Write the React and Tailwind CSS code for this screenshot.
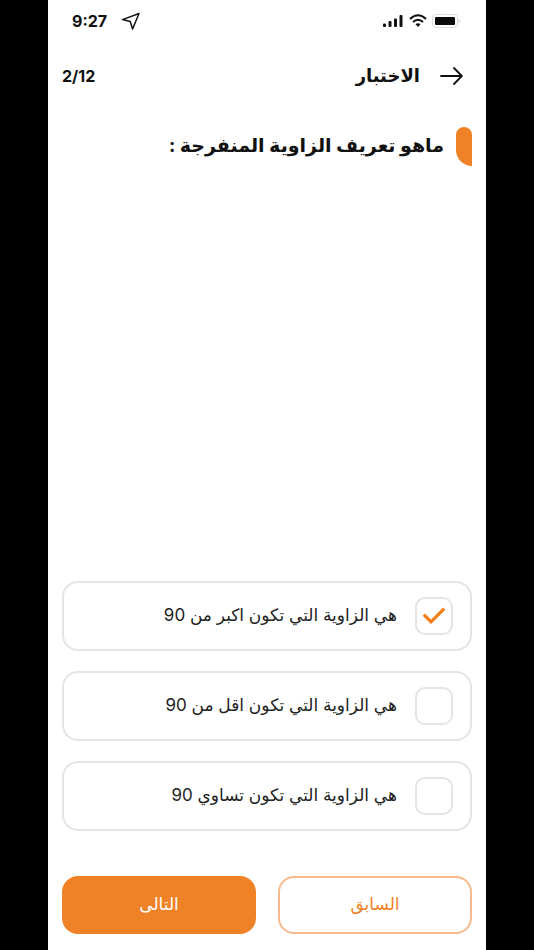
import React, { useState } from 'react'

const options = [
  { id: 'greater', label: 'هي الزاوية التي تكون اكبر من 90' },
  { id: 'less', label: 'هي الزاوية التي تكون اقل من 90' },
  { id: 'equal', label: 'هي الزاوية التي تكون تساوي 90' },
]

const StatusBar = () => {
  return (
    <div dir="ltr" className="flex items-center justify-between h-[42px] px-[10px]">
      <div className="flex items-center gap-[14px]">
        <span className="text-base font-bold">9:27</span>
        <svg className="w-5 h-5" viewBox="0 0 20 20" fill="none" stroke="currentColor" strokeWidth="1.5" strokeLinejoin="round">
          <path d="M18 2.5 L1.5 8.6 L9.2 10.6 L11.6 18 Z" />
        </svg>
      </div>
      <div className="flex items-center gap-[2px]">
        {/* Signal */}
        <svg className="w-6 h-4" viewBox="0 0 24 16" fill="currentColor">
          <rect x="1" y="10.5" width="3" height="3.5" rx="1" />
          <rect x="6.5" y="8" width="3" height="6" rx="1" />
          <rect x="12" y="5.5" width="3" height="8.5" rx="1" />
          <rect x="17.5" y="2" width="3" height="12" rx="1" />
        </svg>
        {/* Wifi */}
        <svg className="w-5 h-4" viewBox="0 0 20 16" fill="none" stroke="currentColor" strokeWidth="2">
          <path d="M2 6 Q10 -1.5 18 6" />
          <path d="M5 9 Q10 4.5 15 9" />
          <path d="M7.5 11.2 Q10 9.2 12.5 11.2 L10 14 Z" fill="currentColor" stroke="none" />
        </svg>
        {/* Battery */}
        <svg className="w-8 h-4" viewBox="0 0 32 16">
          <rect x="2.5" y="1.5" width="25" height="13" rx="3.5" fill="#fff" stroke="#dedede" />
          <rect x="5" y="4" width="20" height="8" rx="1" fill="#0b0b0b" />
          <path d="M28.5 5.5 Q31 8 28.5 10.5 Z" fill="#c9c9c9" />
        </svg>
      </div>
    </div>
  )
}

const Option = ({ label, checked, onChange }) => {
  return (
    <label className="flex items-center gap-[18px] h-[70px] px-[17px] border-2 border-[#e4e4e4] rounded-2xl cursor-pointer">
      <span className="relative flex items-center justify-center w-[38px] h-[38px] shrink-0">
        <input
          type="checkbox"
          checked={checked}
          onChange={onChange}
          className="peer appearance-none w-full h-full border-2 border-[#e4e4e4] rounded-[10px]"
        />
        <svg
          className="absolute w-6 h-6 text-[#f57c14] opacity-0 peer-checked:opacity-100 pointer-events-none"
          viewBox="0 0 24 24"
          fill="none"
          stroke="currentColor"
          strokeWidth="3.2"
        >
          <path d="M1.8 10.6 L9 17.8 L22.2 4.6" />
        </svg>
      </span>
      <span className="text-[17px] text-[#222]">{label}</span>
    </label>
  )
}

const App = () => {
  const [selected, setSelected] = useState('greater')

  return (
    <div dir="rtl" className="min-h-screen bg-black px-12 flex font-['Inter','DejaVu_Sans',sans-serif]">
      <main className="flex-1 flex flex-col bg-white text-[#111] px-[14px] pb-4">
        <StatusBar />

        <header className="flex items-center justify-between h-[68px]">
          <div className="flex items-center gap-3">
            <button type="button" aria-label="رجوع" className="px-2">
              <svg className="w-6 h-6" viewBox="0 0 24 24" fill="none" stroke="currentColor" strokeWidth="1.8" strokeLinecap="round" strokeLinejoin="round">
                <path d="M1 12 H21.5" />
                <path d="M14 4 L21.8 12 L14 20" />
              </svg>
            </button>
            <h1 className="text-lg font-bold">الاختبار</h1>
          </div>
          <span dir="ltr" className="text-base font-bold">2/12</span>
        </header>

        <section className="flex items-center gap-3 mt-[17px]">
          <span className="w-4 h-[39px] bg-[#ef8226] rounded-t-lg rounded-bl-2xl"></span>
          <h2 className="text-[19px] font-bold">ماهو تعريف الزاوية المنفرجة :</h2>
        </section>

        <div className="flex flex-col gap-5 mt-auto">
          {options.map((option) => (
            <Option
              key={option.id}
              label={option.label}
              checked={selected === option.id}
              onChange={() => setSelected(option.id)}
            />
          ))}
        </div>

        <div className="grid grid-cols-2 gap-[22px] mt-[45px]">
          <button type="button" className="h-[58px] border-2 border-[#f8b98c] rounded-2xl text-[#ef8226] text-[17px]">
            السابق
          </button>
          <button type="button" className="h-[58px] rounded-2xl bg-[#ef8226] text-white text-[17px]">
            التالى
          </button>
        </div>
      </main>
    </div>
  )
}

export default App
